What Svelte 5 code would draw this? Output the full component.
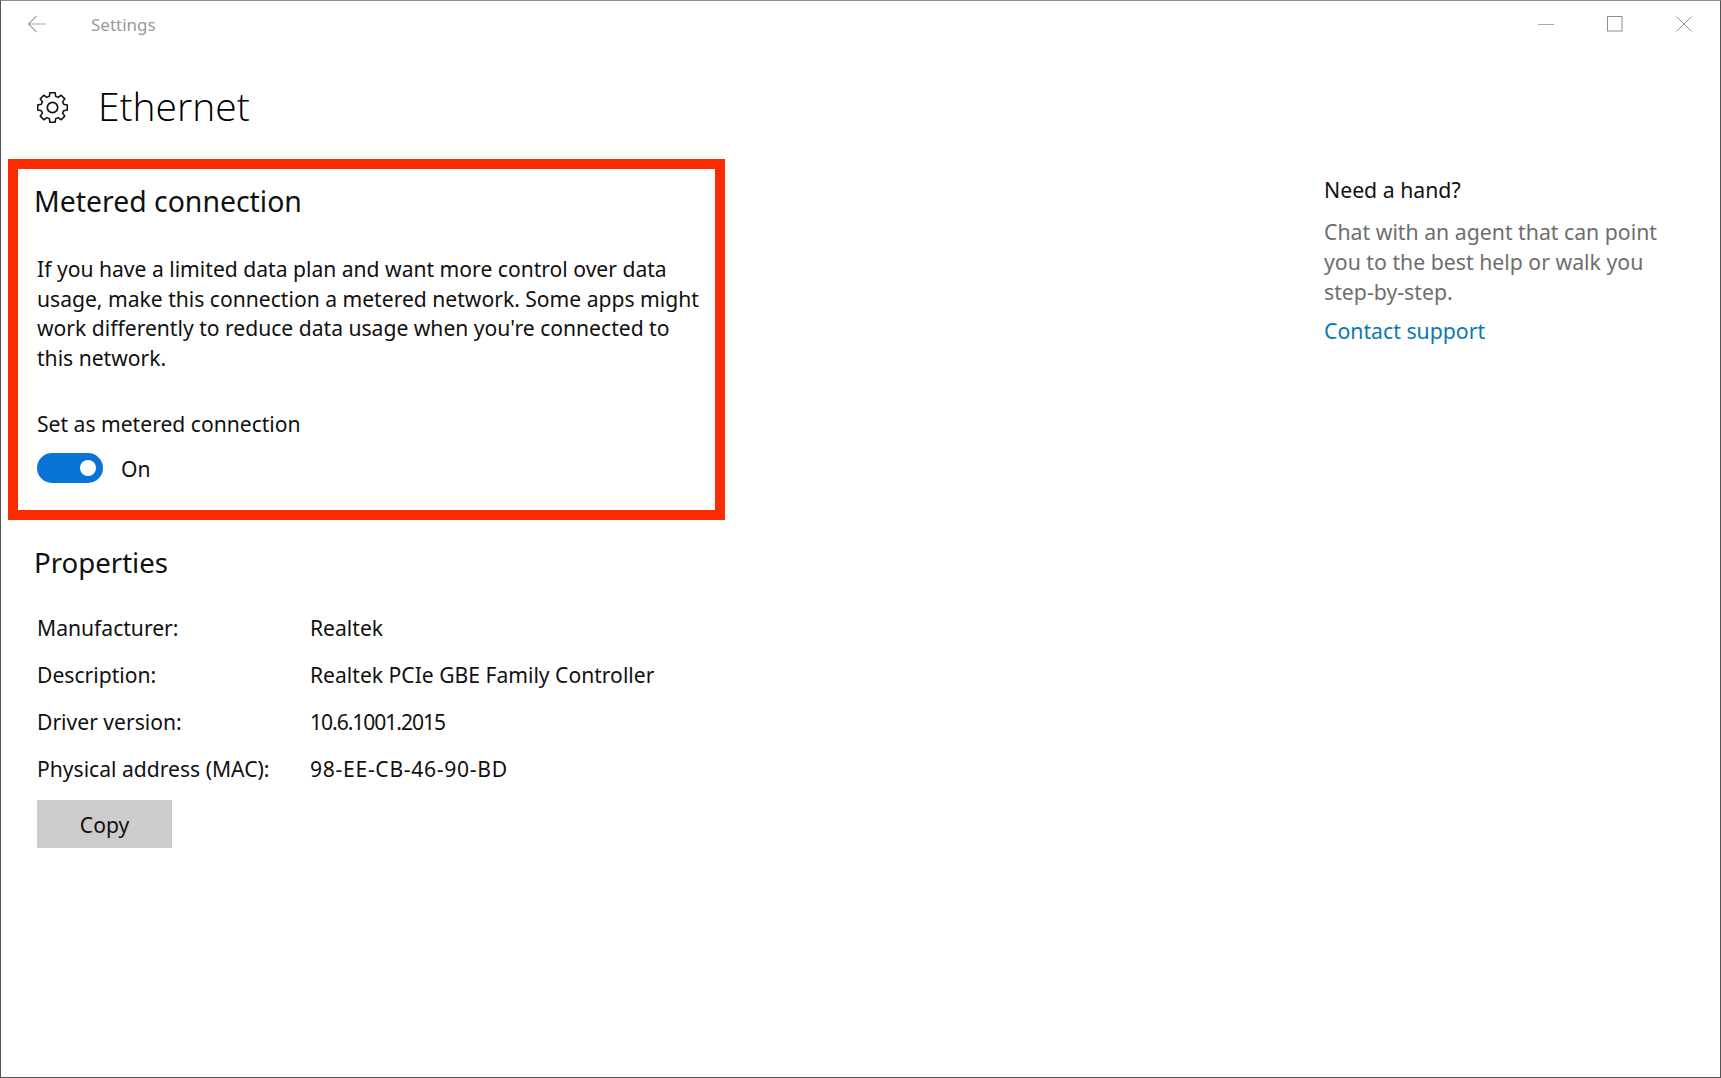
<script>
  const props = [
    ['Manufacturer:', 'Realtek', ''],
    ['Description:', 'Realtek PCIe GBE Family Controller', ''],
    ['Driver version:', '10.6.1001.2015', 'tight'],
    ['Physical address (MAC):', '98-EE-CB-46-90-BD', 'wide']
  ];
</script>

<div class="window">
  <header class="titlebar">
    <svg class="back" width="20" height="18" viewBox="0 0 20 18" fill="none" stroke="#a6a6a6" stroke-width="1.2"><path d="M19 9H1.500M9.500 1 1.500 9l8 8"/></svg>
    <span class="apptitle">Settings</span>
    <div class="controls">
      <svg width="16" height="16" viewBox="0 0 16 16" fill="none" stroke="#a8a8a8" stroke-width="1"><path d="M0 8.500h16"/></svg>
      <svg width="16" height="16" viewBox="0 0 16 16" fill="none" stroke="#8e8e8e" stroke-width="1"><rect x="0.500" y="0.500" width="14.500" height="14.500"/></svg>
      <svg width="16" height="16" viewBox="0 0 16 16" fill="none" stroke="#909090" stroke-width="1"><path d="M0.500 0.500 15.500 15.500M15.500 0.500 0.500 15.500"/></svg>
    </div>
  </header>

  <div class="pagehead">
    <svg class="gear" width="31" height="31" viewBox="0 0 31 31" fill="none" stroke="#111" stroke-width="1.700" stroke-linejoin="round">
      <path d="M12.700 1.600h5.600l.7 4 2.600 1.100 3.300-2.300 3.900 3.900-2.300 3.300 1.100 2.600 4 .7v5.600l-4 .7-1.100 2.600 2.300 3.300-3.900 3.900-3.300-2.300-2.600 1.100-.7 4h-5.600l-.7-4-2.600-1.100-3.300 2.300-3.900-3.900 2.300-3.300-1.100-2.600-4-.7v-5.600l4-.7 1.100-2.600-2.300-3.300 3.900-3.900 3.300 2.300 2.600-1.100z" transform="translate(15.500 15.500) scale(.92) translate(-15.500 -17.700)"/>
      <circle cx="15.500" cy="15.500" r="5.200"/>
    </svg>
    <h1>Ethernet</h1>
  </div>

  <div class="columns">
    <main class="left">
      <section class="metered">
        <h2>Metered connection</h2>
        <p class="desc">If you have a limited data plan and want more control over data usage, make this connection a metered network. Some apps might work differently to reduce data usage when you're connected to this network.</p>
        <div class="setlabel">Set as metered connection</div>
        <div class="togglerow">
          <span class="toggle"><span class="knob"></span></span>
          <span>On</span>
        </div>
      </section>

      <section class="properties">
        <h2>Properties</h2>
        <dl>
          {#each props as [k, v, fit]}
            <div class="row"><dt>{k}</dt><dd class={fit}>{v}</dd></div>
          {/each}
        </dl>
        <button class="copy">Copy</button>
      </section>
    </main>

    <aside class="help">
      <h3>Need a hand?</h3>
      <p>Chat with an agent that can point you to the best help or walk you step-by-step.</p>
      <a href="#support">Contact support</a>
    </aside>
  </div>
</div>

<style>
  :global(body) { margin: 0; background: #fff; }
  .window {
    box-sizing: border-box;
    width: 1721px;
    height: 1078px;
    border: 1px solid #555;
    border-top-color: #8c8c8c;
    background: #fff;
    color: #111;
    font-family: "Noto Sans", "Open Sans", sans-serif;
    font-size: 21.1px;
    overflow: hidden;
  }
  .titlebar {
    display: flex;
    align-items: center;
    height: 46px;
    padding-left: 26px;
  }
  .back { flex: none; }
  .apptitle { margin-left: 44px; color: #9a9a9a; font-size: 17px; }
  .controls {
    margin-left: auto;
    display: flex;
    gap: 53px;
    padding-right: 28px;
  }
  .pagehead {
    display: flex;
    align-items: center;
    height: 60px;
    margin-top: 28px;
    padding-left: 36px;
  }
  .gear { margin-top: 4px; }
  h1 {
    margin: 0 0 0 30px;
    font-size: 39px;
    font-weight: 300;
    color: #000;
    font-family: "Open Sans", "Noto Sans", sans-serif;
  }
  .columns { display: flex; justify-content: space-between; }
  .left { width: 720px; margin-top: 24px; margin-left: 7px; }
  .metered {
    box-sizing: border-box;
    width: 717px;
    height: 361px;
    border: 10px solid #fb2c00;
    padding: 12px 0 0 19px;
  }
  h2 {
    margin: 0 0 0 -3px;
    font-size: 28.400px;
    font-weight: 400;
    line-height: 40px;
  }
  .desc { margin: 33px 0 0; line-height: 29.500px; width: 670px; }
  .setlabel { margin-top: 37px; line-height: 30px; }
  .togglerow { display: flex; align-items: center; gap: 18px; margin-top: 14px; }
  .toggle {
    display: flex;
    align-items: center;
    justify-content: flex-end;
    box-sizing: border-box;
    width: 66px;
    height: 30px;
    border-radius: 15px;
    background: #0a74d6;
    padding-right: 7px;
  }
  .knob { width: 16px; height: 16px; border-radius: 50%; background: #fff; }
  .properties { margin-top: 22px; padding-left: 29px; }
  .properties h2 { font-size: 27.600px; }
  dl { margin: 22px 0 0; }
  .row { display: flex; height: 47px; align-items: center; }
  dt { width: 273px; }
  dd { margin: 0; }
  dd.tight { letter-spacing: -1.050px; }
  dd.wide { letter-spacing: 0.700px; }
  .copy {
    display: block;
    width: 135px;
    height: 48px;
    margin-top: 8px;
    border: 0;
    background: #cccccc;
    color: #111;
    font: inherit;
  }
  .help { width: 379px; margin-top: 40px; margin-right: 17px; font-size: 21.250px; }
  .help h3 { margin: 0; font-size: inherit; font-weight: 400; line-height: 30px; }
  .help p { margin: 12px 0 0; color: #6e6e6e; line-height: 30px; width: 345px; }
  .help a { display: block; margin-top: 9px; color: #0a78b4; text-decoration: none; line-height: 30px; }
</style>
